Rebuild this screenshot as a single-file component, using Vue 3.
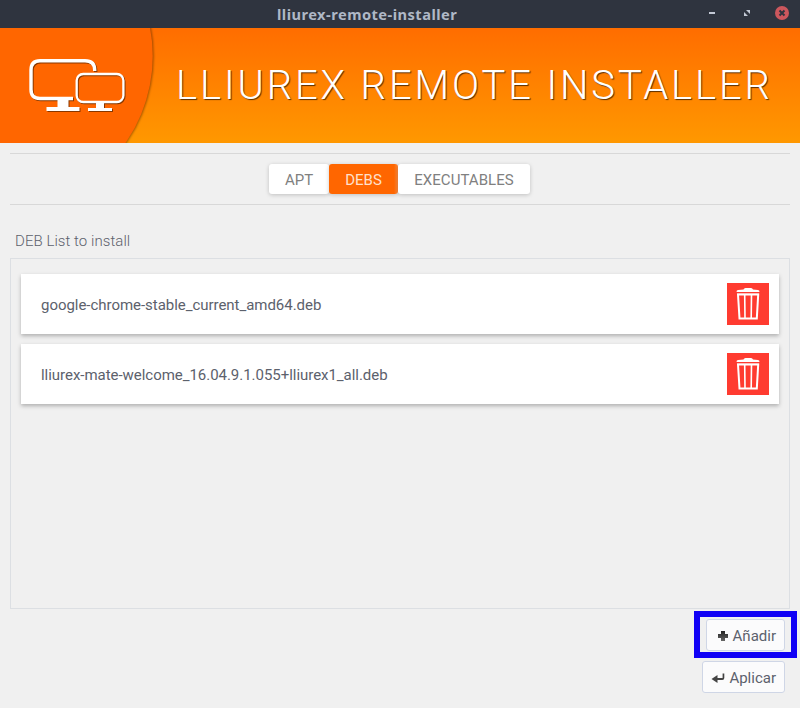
<script setup>
const tabs = [
  { id: 'apt', label: 'APT' },
  { id: 'debs', label: 'DEBS' },
  { id: 'exe', label: 'EXECUTABLES' },
]
const active = 'debs'
const packages = [
  'google-chrome-stable_current_amd64.deb',
  'lliurex-mate-welcome_16.04.9.1.055+lliurex1_all.deb',
]
</script>

<template>
  <div class="window">
    <header class="titlebar">
      <span class="caption">lliurex-remote-installer</span>
      <svg class="controls" width="100" height="28" viewBox="0 0 100 28">
        <path d="M9 12h6v2H9z" fill="#c3c9d5" />
        <path d="M46 10h4v4zM44 12v4h4z" fill="#c3c9d5" />
        <circle cx="82" cy="13" r="7" fill="#cc575d" />
        <path d="M79.500 10.500l5 5M84.500 10.500l-5 5" stroke="#2f343f" stroke-width="2" />
      </svg>
    </header>

    <section class="banner">
      <svg class="emblem" width="160" height="115" viewBox="0 28 160 115">
        <circle class="disc" cx="0" cy="56" r="152.700" fill="#ff6600" />
        <g class="screens" fill="none" stroke="#fff">
          <path d="M73 98.500H40Q31 98.500 31 89.500V70Q31 60.700 40 60.700H85Q94.700 60.700 94.700 70V71" stroke-width="3.400" />
          <path d="M57.500 98h11v9h11v4h-33v-4h11z" fill="#fff" stroke="none" />
          <rect x="76.700" y="74" width="46.700" height="28" rx="6.500" stroke-width="2.300" />
          <path d="M96 102h8v6h8v3H88v-3h8z" fill="#fff" stroke="none" />
        </g>
      </svg>
      <h1>LLIUREX REMOTE INSTALLER</h1>
    </section>

    <nav class="switcher">
      <div class="tabs">
        <button v-for="t in tabs" :key="t.id" :class="['tab', t.id, { active: t.id === active }]">{{ t.label }}</button>
      </div>
    </nav>

    <main>
      <h2>DEB List to install</h2>
      <div class="list">
        <div v-for="p in packages" :key="p" class="row">
          <span>{{ p }}</span>
          <button class="remove" aria-label="Remove">
            <svg width="42" height="42" viewBox="0 0 42 42">
              <g fill="none" stroke="#fff">
                <path d="M16.500 6.500Q17 5 18.500 5H24Q25.500 5 26 6.500L31 7Q32.500 7 32.500 9H9.500Q9.500 7 11 7z" fill="#fff" stroke="none" />
                <path d="M10 10.500H32" stroke="#fff" stroke-opacity=".35" />
                <path d="M11 11.500H31.200L29.800 35.500H12.500z" stroke-width="2" />
                <path d="M17.700 12L18 35M24.500 12L24.200 35" stroke-width="1.600" />
              </g>
            </svg>
          </button>
        </div>
      </div>
    </main>

    <footer>
      <div class="highlight">
        <button class="action">
          <svg width="12" height="12" viewBox="0 0 12 12">
            <defs><linearGradient id="ink" x2="0" y2="1"><stop stop-color="#222" /><stop offset="1" stop-color="#666" /></linearGradient></defs>
            <path d="M4 1h4v3h3v4H8v3H4V8H1V4h3z" fill="url(#ink)" />
          </svg>
          <span>Añadir</span>
        </button>
      </div>
      <button class="action apply">
        <svg width="14" height="12" viewBox="0 0 14 12">
          <path d="M11.600 1.500h1.700V6q0 2-2 2H6.500v3L.5 6.900 6.500 3V6h5.100z" fill="#444" />
        </svg>
        <span>Aplicar</span>
      </button>
    </footer>
  </div>
</template>

<style>
body { margin: 0; background: #f0f0f0; }
</style>

<style scoped>
.window {
  width: 800px;
  height: 708px;
  overflow: hidden;
  display: flex;
  flex-direction: column;
  background: #f0f0f0;
  font-family: Roboto, "Liberation Sans", sans-serif;
  font-size: 15px;
  color: #5c616c;
}
button { font: inherit; margin: 0; padding: 0; border: 0; color: inherit; }
svg { display: block; flex: none; }
.titlebar {
  height: 28px;
  flex: none;
  display: flex;
  align-items: center;
  justify-content: space-between;
  padding-left: 277px;
  background: #2f343f;
}
.caption {
  font: 700 14.67px/28px "Noto Sans", sans-serif;
  letter-spacing: .46px;
  color: #afb8c6;
  white-space: nowrap;
}
.banner {
  height: 115px;
  flex: none;
  display: flex;
  align-items: flex-start;
  background: linear-gradient(#ff6d00, #ff9800);
}
.disc { filter: drop-shadow(1px 0 1px rgba(80, 40, 0, .55)); }
.screens { filter: drop-shadow(1px 1px .5px rgba(70, 30, 0, .65)); }
h1 {
  margin: 0;
  padding: 34px 0 0 16px;
  font-size: 40px;
  line-height: 47px;
  font-weight: 300;
  letter-spacing: 2.88px;
  white-space: nowrap;
  color: #fff;
  text-shadow: 1px 1px 1px rgba(0, 0, 0, .65);
}
.switcher {
  box-sizing: border-box;
  height: 52px;
  flex: none;
  margin: 10px 10px 0;
  padding-top: 10px;
  border-top: 1px solid #d8d8d8;
  border-bottom: 1px solid #d8d8d8;
}
.tabs { display: flex; padding-left: 259px; }
.tab {
  height: 30px;
  border-radius: 3px;
  background: #fff;
  color: #808080;
  line-height: 30px;
  padding-top: 1px;
  box-shadow: 0 1px 4px rgba(0, 0, 0, .2);
}
.apt { width: 60px; }
.debs { width: 69px; }
.exe { width: 132px; letter-spacing: .06px; }
.tab.active {
  background: linear-gradient(90deg, #ff6600 94%, #ff8a3c);
  color: #ffe0cc;
}
main { flex: none; padding: 27px 10px 0; }
h2 {
  margin: 0;
  padding-left: 5px;
  height: 26px;
  line-height: 18px;
  font-size: 15px;
  font-weight: 300;
  letter-spacing: .06px;
}
.list {
  box-sizing: border-box;
  height: 351px;
  padding: 15px 10px;
  border: 1px solid #dcdfe3;
  display: flex;
  flex-direction: column;
  gap: 10px;
}
.row {
  box-sizing: border-box;
  height: 60px;
  display: flex;
  align-items: center;
  justify-content: space-between;
  padding: 0 10px 0 20px;
  background: #fff;
  box-shadow: 0 2px 4px rgba(0, 0, 0, .27);
}
.row > span { padding-top: 2px; letter-spacing: -.035px; }
.remove { width: 42px; height: 42px; background: #ff3b30; }
footer {
  display: flex;
  flex-direction: column;
  align-items: flex-end;
  padding: 2px 3px 0 0;
}
.highlight {
  box-sizing: border-box;
  width: 103px;
  height: 47px;
  padding: 2px 6px;
  border: 6px solid #1000f5;
}
.action {
  box-sizing: border-box;
  width: 79px;
  height: 32px;
  display: flex;
  align-items: center;
  justify-content: flex-end;
  gap: 4px;
  padding: 0 8px;
  border: 1px solid #cfd6e6;
  border-radius: 3px;
  background: #fbfbfc;
}
.action span { padding-top: 1px; }
.action svg { margin-top: 2px; }
.apply { width: 83px; margin: 3px 12px 0 0; }
</style>
